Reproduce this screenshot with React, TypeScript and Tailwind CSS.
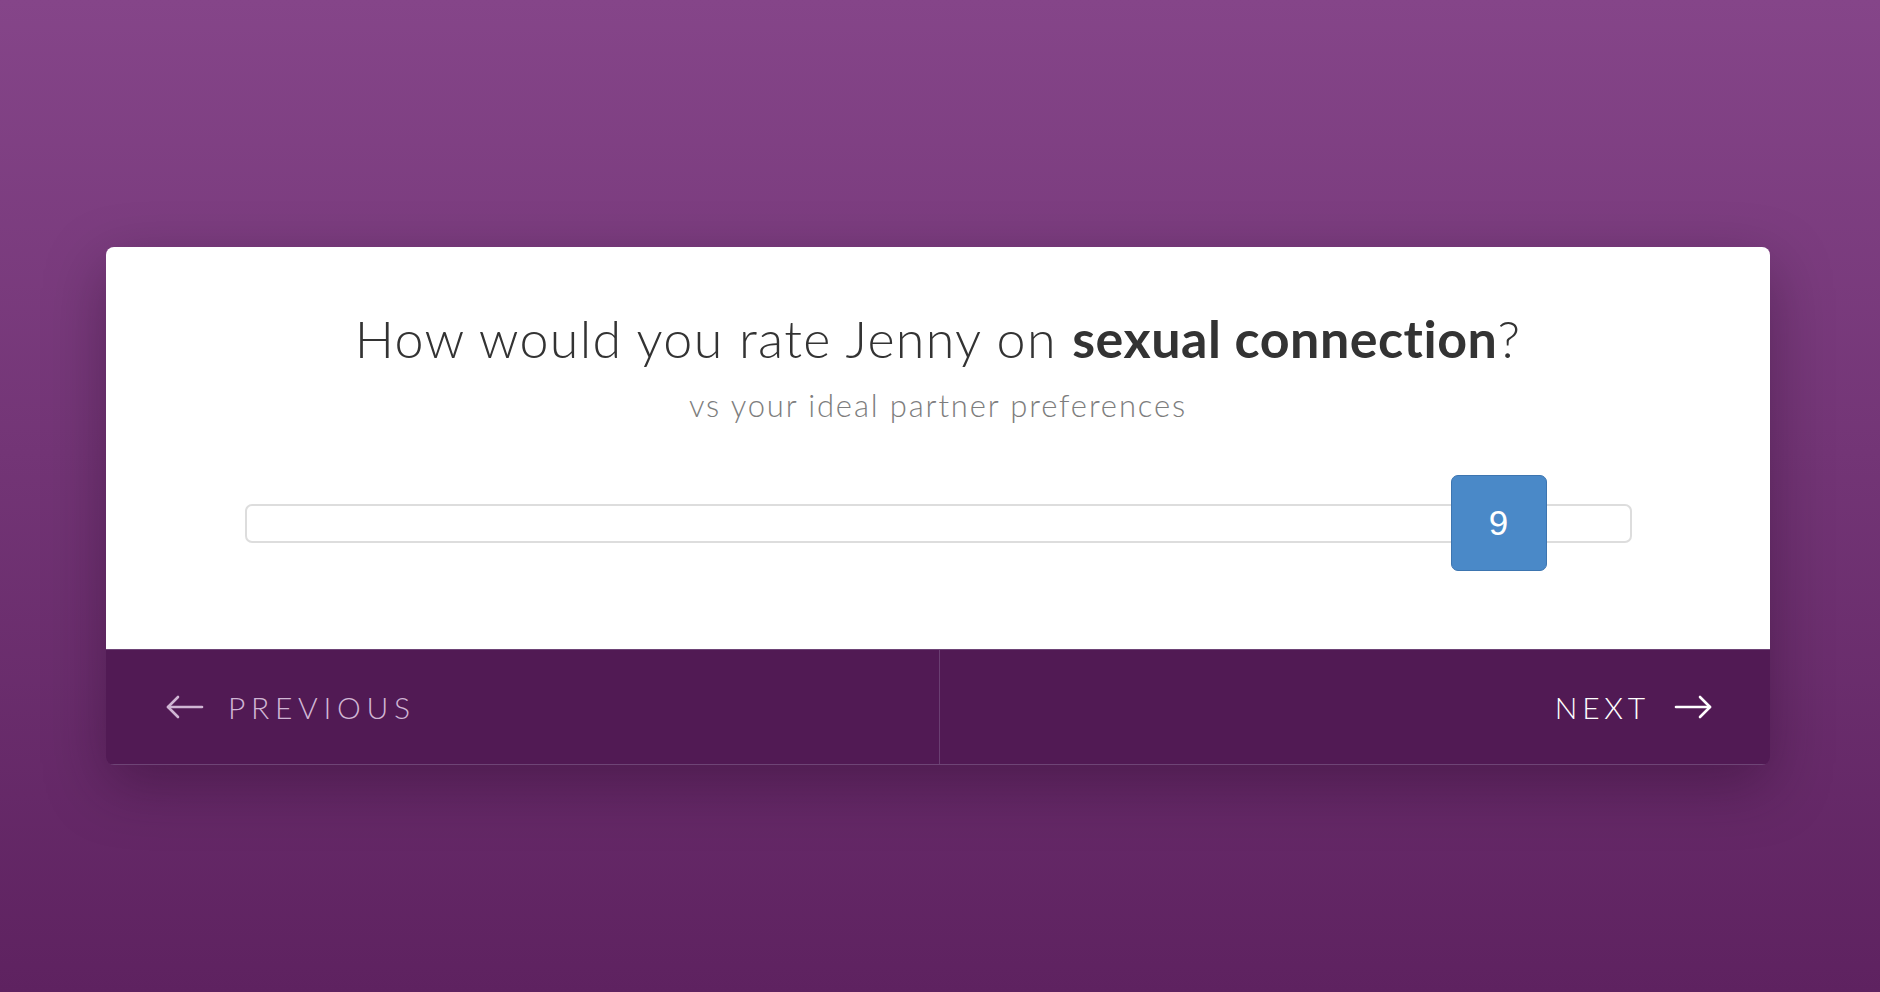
import { useState } from "react";

const ArrowLeft = () => (
    <svg width="38" height="24" viewBox="0 0 38 24" fill="none" stroke="currentColor" strokeWidth="2.6" strokeLinecap="round" strokeLinejoin="round">
        <path d="M2 12 H36" />
        <path d="M12 2 L2 12 L12 22" />
    </svg>
);

const ArrowRight = () => (
    <svg width="38" height="24" viewBox="0 0 38 24" fill="none" stroke="currentColor" strokeWidth="2.6" strokeLinecap="round" strokeLinejoin="round">
        <path d="M2 12 H36" />
        <path d="M26 2 L36 12 L26 22" />
    </svg>
);

const App = () => {
    const [value] = useState(9);
    // handle offset inside the 1387px track
    const handleLeft = 1206;

    return (
        <div
            className="w-full h-[992px] bg-gradient-to-b from-[#854589] to-[#5e2260] pt-[247px]"
            style={{ fontFamily: "Lato, 'Noto Sans', sans-serif" }}
        >
            <div className="ml-[106px] w-[1664px] rounded-[8px] overflow-hidden shadow-[0_20px_60px_rgba(30,0,30,0.35)]">
                {/* Question */}
                <div className="bg-white h-[402px] flex flex-col items-center pt-[60px]">
                    <h1 className="text-[52px] leading-[62px] font-light tracking-[0.025em] text-[#333]">
                        How would you rate Jenny on <span className="font-bold tracking-[0.01em]">sexual connection</span>?
                    </h1>
                    <p className="mt-[17px] text-[31px] leading-[38px] font-light tracking-[0.06em] text-[#7d7d7d]">
                        vs your ideal partner preferences
                    </p>
                    {/* Slider */}
                    <div className="mt-[51px] w-[1387px] h-[96px] relative flex items-center">
                        <div className="w-full h-[39px] rounded-[7px] border-2 border-[#dddddd] bg-white" />
                        <div
                            className="absolute top-0 w-[96px] h-[96px] rounded-[7px] bg-[#4a89c8] border border-[#3d75b0] flex items-center justify-center text-white text-[35px]"
                            style={{ left: handleLeft, fontFamily: "'Liberation Sans', Arial, sans-serif" }}
                        >
                            {value}
                        </div>
                    </div>
                </div>
                {/* Footer */}
                <div className="h-[116px] flex bg-[#511a54] border-t border-b border-[#6e4476]">
                    <button className="flex-1 flex items-center gap-[24px] pl-[60px] text-[#d0b6d4] border-r border-[#6a3f72]">
                        <ArrowLeft />
                        <span className="text-[30px] tracking-[0.19em] font-light">PREVIOUS</span>
                    </button>
                    <button className="flex-1 flex items-center justify-end gap-[24px] pr-[58px] text-white">
                        <span className="text-[30px] tracking-[0.16em] font-light">NEXT</span>
                        <ArrowRight />
                    </button>
                </div>
            </div>
        </div>
    );
};

export default App;
